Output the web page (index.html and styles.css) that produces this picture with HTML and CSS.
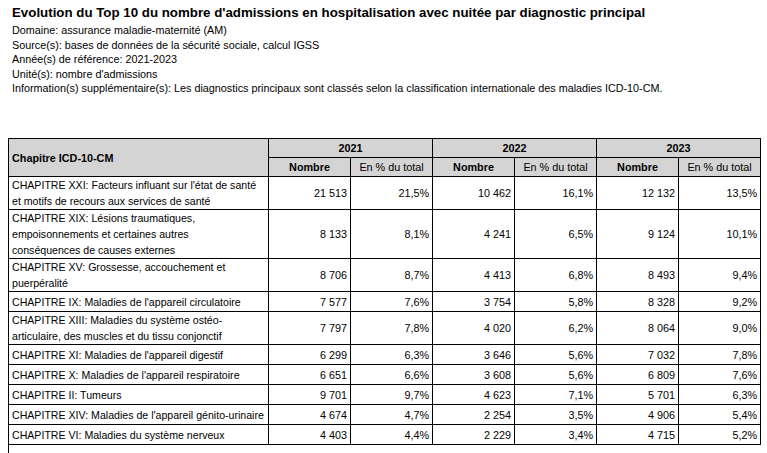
FILE: index.html
```html
<!DOCTYPE html>
<html lang="fr">
<head>
<meta charset="utf-8">
<title>Evolution du Top 10</title>
<link rel="stylesheet" href="styles.css">
</head>
<body>
<div class="meta">
  <div class="title">Evolution du Top 10 du nombre d'admissions en hospitalisation avec nuitée par diagnostic principal</div>
  <div class="line">Domaine: assurance maladie-maternité (AM)</div>
  <div class="line">Source(s): bases de données de la sécurité sociale, calcul IGSS</div>
  <div class="line">Année(s) de référence: 2021-2023</div>
  <div class="line">Unité(s): nombre d'admissions</div>
  <div class="line">Information(s) supplémentaire(s): Les diagnostics principaux sont classés selon la classification internationale des maladies ICD-10-CM.</div>
</div>
<table class="data">
  <colgroup>
    <col class="c-label"><col class="c-num"><col class="c-num"><col class="c-num"><col class="c-num"><col class="c-num"><col class="c-num">
  </colgroup>
  <thead>
    <tr>
      <th rowspan="2" class="h-label">Chapitre ICD-10-CM</th>
      <th colspan="2">2021</th>
      <th colspan="2">2022</th>
      <th colspan="2">2023</th>
    </tr>
    <tr>
      <th>Nombre</th><th class="light">En % du total</th>
      <th>Nombre</th><th class="light">En % du total</th>
      <th>Nombre</th><th class="light">En % du total</th>
    </tr>
  </thead>
  <tbody>
    <tr><td class="lbl">CHAPITRE XXI: Facteurs influant sur l'état de santé<br>et motifs de recours aux services de santé</td><td>21 513</td><td>21,5%</td><td>10 462</td><td>16,1%</td><td>12 132</td><td>13,5%</td></tr>
    <tr><td class="lbl">CHAPITRE XIX: Lésions traumatiques,<br>empoisonnements et certaines autres<br>conséquences de causes externes</td><td>8 133</td><td>8,1%</td><td>4 241</td><td>6,5%</td><td>9 124</td><td>10,1%</td></tr>
    <tr><td class="lbl">CHAPITRE XV: Grossesse, accouchement et<br>puerpéralité</td><td>8 706</td><td>8,7%</td><td>4 413</td><td>6,8%</td><td>8 493</td><td>9,4%</td></tr>
    <tr><td class="lbl">CHAPITRE IX: Maladies de l'appareil circulatoire</td><td>7 577</td><td>7,6%</td><td>3 754</td><td>5,8%</td><td>8 328</td><td>9,2%</td></tr>
    <tr><td class="lbl">CHAPITRE XIII: Maladies du système ostéo-<br>articulaire, des muscles et du tissu conjonctif</td><td>7 797</td><td>7,8%</td><td>4 020</td><td>6,2%</td><td>8 064</td><td>9,0%</td></tr>
    <tr><td class="lbl">CHAPITRE XI: Maladies de l'appareil digestif</td><td>6 299</td><td>6,3%</td><td>3 646</td><td>5,6%</td><td>7 032</td><td>7,8%</td></tr>
    <tr><td class="lbl">CHAPITRE X: Maladies de l'appareil respiratoire</td><td>6 651</td><td>6,6%</td><td>3 608</td><td>5,6%</td><td>6 809</td><td>7,6%</td></tr>
    <tr><td class="lbl">CHAPITRE II: Tumeurs</td><td>9 701</td><td>9,7%</td><td>4 623</td><td>7,1%</td><td>5 701</td><td>6,3%</td></tr>
    <tr><td class="lbl">CHAPITRE XIV: Maladies de l'appareil génito-urinaire</td><td>4 674</td><td>4,7%</td><td>2 254</td><td>3,5%</td><td>4 906</td><td>5,4%</td></tr>
    <tr><td class="lbl">CHAPITRE VI: Maladies du système nerveux</td><td>4 403</td><td>4,4%</td><td>2 229</td><td>3,4%</td><td>4 715</td><td>5,2%</td></tr>
  </tbody>
</table>
<div class="tail"></div>
</body>
</html>
```
FILE: styles.css
```css
html, body {
  margin: 0;
  padding: 0;
  background: #ffffff;
  color: #000000;
  font-family: "Liberation Sans", Arial, sans-serif;
  font-size: 10.8px;
}

.meta {
  padding: 5px 12px 0 12px;
  height: 138px;
  box-sizing: border-box;
}

.title {
  font-weight: bold;
  font-size: 13.3px;
  line-height: 16px;
  margin-bottom: 2px;
}

.line {
  line-height: 14.5px;
}

.data {
  margin-left: 8px;
  border-collapse: collapse;
  table-layout: fixed;
  width: 753px;
}

.c-label { width: 260px; }
.c-num { width: 82px; }

.data thead tr { height: 19px; }
.data tbody tr { height: 20px; }

.data th,
.data td {
  border: 1px solid #000000;
  line-height: 16px;
  padding: 0 3px;
  vertical-align: middle;
}

.data th {
  background: #d4d4d4;
  font-weight: bold;
  text-align: center;
}

.data th.light {
  font-weight: normal;
}

.data th.h-label {
  text-align: left;
}

.data td {
  text-align: right;
}

.data td.lbl {
  text-align: left;
  white-space: nowrap;
  font-size: 10.6px;
}

.tail {
  margin-left: 8px;
  height: 12px;
  border-left: 1px solid #000000;
}
```
